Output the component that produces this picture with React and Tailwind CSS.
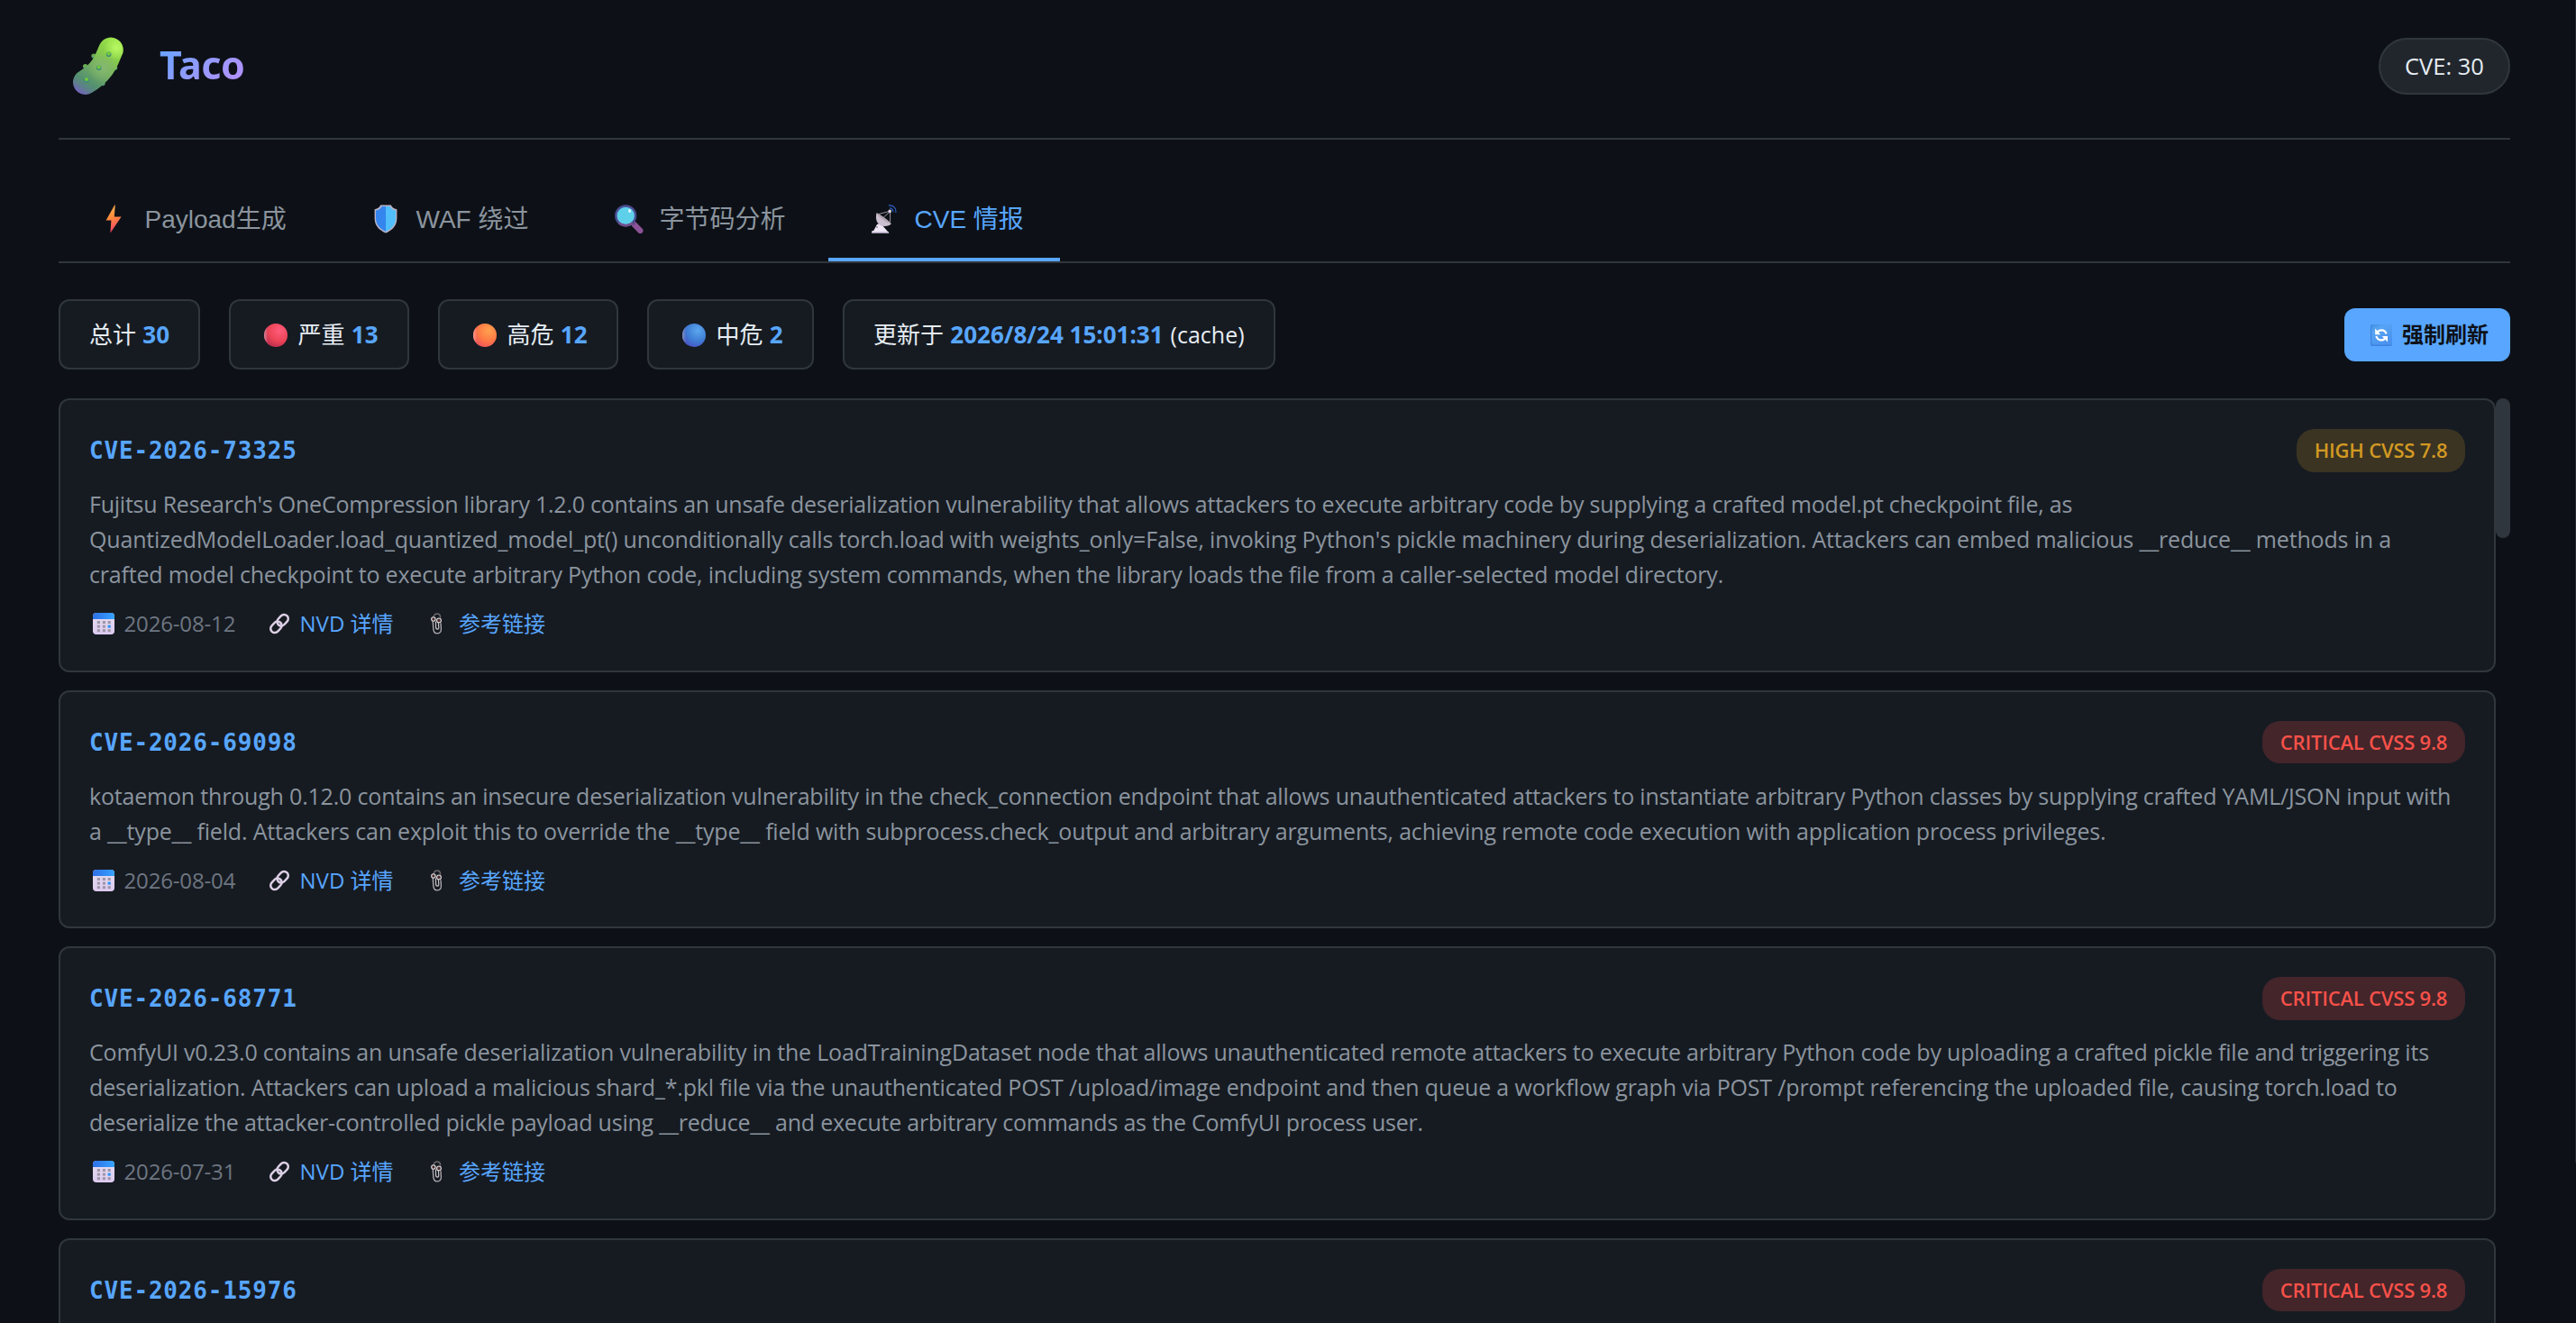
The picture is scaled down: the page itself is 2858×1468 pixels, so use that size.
import React from 'react';

function Pickle() {
  const bumps = [[39.7, 19.3], [28.7, 34.3], [15, 47.7]];
  const edge = [[23, 21], [13.6, 32.5], [46.6, 34.2], [33, 51.6]];
  return (
    <svg className="ml-4 h-16 w-14 shrink-0" viewBox="0 0 56 64" fill="none">
      <defs>
        <linearGradient id="pkBody" x1="50" y1="2" x2="10" y2="64" gradientUnits="userSpaceOnUse">
          <stop offset="0" stopColor="#9be548" />
          <stop offset="0.3" stopColor="#86cb49" />
          <stop offset="0.5" stopColor="#76b25c" />
          <stop offset="0.8" stopColor="#549070" />
          <stop offset="0.9" stopColor="#5d7f8c" />
          <stop offset="1" stopColor="#7463bd" />
        </linearGradient>
        <radialGradient id="pkShine" cx="48" cy="12" r="14" gradientUnits="userSpaceOnUse">
          <stop offset="0" stopColor="#b8f963" />
          <stop offset="1" stopColor="#b8f963" stopOpacity="0" />
        </radialGradient>
        <radialGradient id="pkMid" cx="33" cy="34" r="17" gradientUnits="userSpaceOnUse">
          <stop offset="0" stopColor="#86b872" />
          <stop offset="1" stopColor="#86b872" stopOpacity="0" />
        </radialGradient>
        <linearGradient id="pkBump" x1="0" y1="0" x2="0" y2="1">
          <stop offset="0" stopColor="#5faa3c" />
          <stop offset="0.5" stopColor="#6fae5a" />
          <stop offset="1" stopColor="#3f8a80" />
        </linearGradient>
      </defs>
      {edge.map(([x, y]) => <circle key={x} cx={x} cy={y} r="2.6" fill="url(#pkBump)" />)}
      {['url(#pkBody)', 'url(#pkMid)', 'url(#pkShine)'].map((s) => (
        <path key={s} d="M42 14.3C38 22 36 37 13.7 50.2" stroke={s} strokeWidth="27.4" strokeLinecap="round" />
      ))}
      {bumps.map(([x, y]) => (
        <g key={x}>
          <circle cx={x} cy={y} r="2.8" fill="#3d8a7c" />
          <circle cx={x} cy={y - 0.7} r="2.1" fill="#74c83c" />
        </g>
      ))}
    </svg>
  );
}

const Bolt = () => (
  <svg className="size-8" viewBox="0 0 32 32">
    <defs>
      <linearGradient id="bolt" x1="0" y1="0" x2="0.2" y2="1">
        <stop offset="0" stopColor="#ffb951" />
        <stop offset="0.5" stopColor="#ff8a3c" />
        <stop offset="1" stopColor="#f0436a" />
      </linearGradient>
    </defs>
    <path d="M16.2 0.4L6.6 17.4H12.4L11.4 31.6L23.6 13.6L15.8 13.4L16.8 0.6Z" fill="url(#bolt)" />
  </svg>
);

const Shield = () => (
  <svg className="size-8" viewBox="0 0 32 32">
    <path d="M10.2 0.5H21.8C22.6 2.8 24.8 4.4 28.4 5.2V15C28.4 23.4 23.2 28.6 16 31.6C8.8 28.6 3.6 23.4 3.6 15V5.2C7.2 4.4 9.4 2.8 10.2 0.5Z" fill="#b9b2c6" />
    <path d="M16 2H11.4C10.6 4.4 8.4 6 5 6.6V15C5 22.4 9.6 27 16 30Z" fill="#3585ee" />
    <path d="M16 2H20.6C21.4 4.4 23.6 6 27 6.6V15C27 22.4 22.4 27 16 30Z" fill="#50bffb" />
  </svg>
);

const Magnifier = () => (
  <svg className="size-8" viewBox="0 0 32 32">
    <path d="M21.6 22L28.4 29" stroke="#8c5396" strokeWidth="6.2" strokeLinecap="round" />
    <path d="M19.4 19.4L22 22" stroke="#63477c" strokeWidth="3.4" />
    <circle cx="12.2" cy="12.4" r="10.9" fill="#5fd0ea" stroke="#4a4d92" strokeWidth="2.4" />
    <path d="M4.6 20.2A10.9 10.9 0 0 0 19.8 20.2" stroke="#75508c" strokeWidth="2.4" fill="none" />
    <ellipse cx="16.6" cy="7" rx="1.7" ry="2" fill="#d5f5fb" />
  </svg>
);

const Dish = () => (
  <svg className="size-8" viewBox="0 0 32 32" fill="none">
    <path d="M8 22L12 20.8L21.4 31.6H2.2V29.6L4.4 28.8Z" fill="#efe6f5" />
    <path d="M2.2 30H20.4L21.4 31.6H2.2Z" fill="#cfc3dc" />
    <circle cx="8" cy="25" r="0.9" fill="#8d8397" />
    <path d="M7.6 9.2C5.6 16 8 22.8 14.4 23.8C18.6 24.4 22 23.4 23.8 21.2Z" fill="#cbbfd0" />
    <path d="M7.6 9.2C11 10.8 20 16.2 23.8 21.2C19 20.6 9.6 14.8 7.6 9.2Z" fill="#b5a7b4" />
    <path d="M9.6 10.6L22 7.4M15.4 14L22.4 8M22.6 8.4V19.6" stroke="#a8a2ae" strokeWidth="0.9" />
    <circle cx="22.2" cy="7.4" r="1.8" fill="#ddd3e4" />
    <path d="M22 3.9C24.6 4.2 25.8 5.8 25.8 8.2M20.8 0.8C26.4 0.6 29.4 3.8 29 9" stroke="#2f62cc" strokeWidth="1.2" />
  </svg>
);

const Refresh = () => (
  <svg className="mt-[2px] h-6 w-6" viewBox="0 0 24 24" fill="none">
    <defs>
      <linearGradient id="rf" x1="0" y1="0" x2="0.6" y2="1">
        <stop offset="0" stopColor="#3f8fe6" />
        <stop offset="0.3" stopColor="#57a4f4" />
        <stop offset="1" stopColor="#4a93ef" />
      </linearGradient>
    </defs>
    <rect width="24" height="24" y="0" rx="2" fill="#3e83dd" />
    <rect x="1.2" width="22.8" height="22.4" rx="1.8" fill="url(#rf)" />
    <path d="M7 9.4C9.4 5.4 15.6 5.2 17.6 10.4" stroke="#fff" strokeWidth="2.3" />
    <path d="M5.2 4.6V11.2H11.2Z" fill="#fff" />
    <path d="M6.4 13C8 18.4 14.2 18.6 16.8 14.8" stroke="#fff" strokeWidth="2.3" />
    <path d="M19 19.6V13H12.8Z" fill="#fff" />
  </svg>
);

const Calendar = () => (
  <svg className="ml-[4px] size-6" viewBox="0 0 24 24">
    <defs>
      <linearGradient id="calTop" x1="0" y1="0" x2="1" y2="0">
        <stop offset="0" stopColor="#2f6fe6" />
        <stop offset="1" stopColor="#35a3ff" />
      </linearGradient>
      <linearGradient id="calBody" x1="0" y1="0" x2="0" y2="1">
        <stop offset="0" stopColor="#e6dcee" />
        <stop offset="1" stopColor="#dccbf0" />
      </linearGradient>
    </defs>
    <rect width="24" height="24" rx="4" fill="url(#calBody)" />
    <path d="M0 7V4A4 4 0 0 1 4 0H20A4 4 0 0 1 24 4V7Z" fill="url(#calTop)" />
    {[9, 13.6, 18.2].map((y) => [4.8, 10.8, 16.6].map((x) => (
      <rect key={x + y} x={x} y={y} width="3.2" height="3" fill={x === 16.6 && y === 13.6 ? '#2f93f5' : '#9e97a8'} />
    )))}
  </svg>
);

const Chain = () => (
  <svg className="size-6" viewBox="0 0 24 24" fill="none" stroke="#ddd0e6" strokeWidth="2.5">
    <rect x="-6.9" y="-4.6" width="13.8" height="9.2" rx="4.6" transform="translate(15.6 8.2) rotate(-47)" />
    <rect x="-6.9" y="-4.6" width="13.8" height="9.2" rx="4.6" transform="translate(8.4 15.8) rotate(-47)" />
  </svg>
);

const Clip = () => (
  <svg className="h-6 w-[14px]" viewBox="0 0 14 24" fill="none">
    <path d="M3.2 5C3.4 2.4 5 1 7 1C9.4 1 10.6 2.8 10.6 5.4" stroke="#6d686c" strokeWidth="1.5" />
    <path d="M2.2 9L2.8 17.6C3 21.4 4.8 22.9 7.2 22.9C10.2 22.9 11.6 20.6 11.4 17.4L11 11.4" stroke="#b3afb4" strokeWidth="1.3" />
    <path d="M5.4 9.6L5.6 16.4C5.8 18.6 8.8 18.6 8.8 16.4L8.4 11" stroke="#c9c5ca" strokeWidth="1.2" />
    <circle cx="2.9" cy="7" r="2.2" fill="#4a2f30" stroke="#e6e2e4" strokeWidth="1.1" />
    <circle cx="9" cy="8.4" r="2.4" fill="#4a2f30" stroke="#e6e2e4" strokeWidth="1.1" />
  </svg>
);

const BALLS = {
  red: ['#ff5c7c', '#ee4558', '#b52a4c', '#d8899a'],
  orange: ['#ffa24f', '#ff7a45', '#ea4f5e', '#ffa08a'],
  blue: ['#5ca6ee', '#3f7fd6', '#4a4fc4', '#8494bb'],
};

function Ball({ tone }) {
  const [hi, mid, low, rim] = BALLS[tone];
  return (
    <svg className="mr-[11.5px] ml-[5px] mt-[2px] size-[26px]" viewBox="0 0 26 26">
      <defs>
        <radialGradient id={`ball-${tone}`} cx="0.66" cy="0.3" r="0.8">
          <stop offset="0" stopColor={hi} />
          <stop offset="0.55" stopColor={mid} />
          <stop offset="1" stopColor={low} />
        </radialGradient>
        <linearGradient id={`rim-${tone}`} x1="0" y1="0" x2="0.16" y2="0">
          <stop offset="0" stopColor={rim} />
          <stop offset="1" stopColor={rim} stopOpacity="0" />
        </linearGradient>
      </defs>
      <circle cx="13" cy="13" r="13" fill={`url(#ball-${tone})`} />
      <circle cx="13" cy="13" r="13" fill={`url(#rim-${tone})`} />
    </svg>
  );
}

const TABS = [
  { label: 'Payload生成', icon: <Bolt />, width: 'w-[293px]' },
  { label: 'WAF 绕过', icon: <Shield />, width: 'w-[262px]' },
  { label: '字节码分析', icon: <Magnifier />, width: 'w-[275px]' },
  { label: 'CVE 情报', icon: <Dish />, width: 'w-[257px]', active: true },
];

const STATS = [
  { label: '总计', value: '30', width: 'w-[157px]' },
  { label: '严重', value: '13', tone: 'red', width: 'w-[200px]' },
  { label: '高危', value: '12', tone: 'orange', width: 'w-[200px]' },
  { label: '中危', value: '2', tone: 'blue', width: 'w-[185px]' },
  { label: '更新于', value: '2026/8/24 15:01:31', note: '(cache)', width: 'w-[480px]' },
];

const CVES = [
  {
    id: 'CVE-2026-73325',
    level: 'HIGH',
    score: '7.8',
    date: '2026-08-12',
    height: 'h-[303.5px]',
    lines: [
      ['tracking-[-0.234px]', "Fujitsu Research's OneCompression library 1.2.0 contains an unsafe deserialization vulnerability that allows attackers to execute arbitrary code by supplying a crafted model.pt checkpoint file, as"],
      ['tracking-[-0.165px]', "QuantizedModelLoader.load_quantized_model_pt() unconditionally calls torch.load with weights_only=False, invoking Python's pickle machinery during deserialization. Attackers can embed malicious __reduce__ methods in a"],
      ['tracking-[-0.187px]', 'crafted model checkpoint to execute arbitrary Python code, including system commands, when the library loads the file from a caller-selected model directory.'],
    ],
  },
  {
    id: 'CVE-2026-69098',
    level: 'CRITICAL',
    score: '9.8',
    date: '2026-08-04',
    height: 'h-[264.5px]',
    lines: [
      ['tracking-[-0.19px]', 'kotaemon through 0.12.0 contains an insecure deserialization vulnerability in the check_connection endpoint that allows unauthenticated attackers to instantiate arbitrary Python classes by supplying crafted YAML/JSON input with'],
      ['tracking-[-0.18px]', 'a __type__ field. Attackers can exploit this to override the __type__ field with subprocess.check_output and arbitrary arguments, achieving remote code execution with application process privileges.'],
    ],
  },
  {
    id: 'CVE-2026-68771',
    level: 'CRITICAL',
    score: '9.8',
    date: '2026-07-31',
    height: 'h-[303.5px]',
    lines: [
      ['tracking-[-0.19px]', 'ComfyUI v0.23.0 contains an unsafe deserialization vulnerability in the LoadTrainingDataset node that allows unauthenticated remote attackers to execute arbitrary Python code by uploading a crafted pickle file and triggering its'],
      ['tracking-[-0.165px]', 'deserialization. Attackers can upload a malicious shard_*.pkl file via the unauthenticated POST /upload/image endpoint and then queue a workflow graph via POST /prompt referencing the uploaded file, causing torch.load to'],
      ['tracking-[-0.217px]', 'deserialize the attacker-controlled pickle payload using __reduce__ and execute arbitrary commands as the ComfyUI process user.'],
    ],
  },
  { id: 'CVE-2026-15976', level: 'CRITICAL', score: '9.8', height: 'h-[303.5px]' },
];

function Card({ cve }) {
  const critical = cve.level === 'CRITICAL';
  return (
    <article className={`${cve.height} shrink-0 rounded-xl border-2 border-[#30363d] bg-[#161b22] px-8 pt-8`}>
      <div className="flex h-12 items-center justify-between">
        <h2 className="mt-px font-['DejaVu_Sans_Mono',monospace] text-[26px] font-bold tracking-[0.82px] text-[#58a6ff]">{cve.id}</h2>
        <span
          className={`flex h-[47.5px] items-center justify-center rounded-[20px] pb-px text-[22px] font-semibold tracking-[-0.2px] ${critical ? 'w-[225px] bg-[#f85149]/20 text-[#f85149]' : 'w-[187px] bg-[#d29922]/20 text-[#d29922]'}`}
        >
          {cve.level} CVSS {cve.score}
        </span>
      </div>
      {cve.lines && (
        <>
          <div className="mt-4 text-[25px] leading-[39px] text-[#8b949e]">
            {cve.lines.map(([tracking, text]) => (
              <p key={text} className={`whitespace-nowrap ${tracking}`}>{text}</p>
            ))}
          </div>
          <div className="mt-[17px] flex h-9 items-center text-2xl leading-9 whitespace-nowrap text-[#58a6ff]">
            <Calendar />
            <span className="ml-[10.5px] w-[160.5px] tracking-[-0.15px] text-[#6e7681]">{cve.date}</span>
            <Chain />
            <span className="ml-[10.5px] w-[145.5px]">NVD 详情</span>
            <Clip />
            <span className="ml-[17px]">参考链接</span>
          </div>
        </>
      )}
    </article>
  );
}

export default function App() {
  return (
    <div className="flex h-[1468px] w-[2858px] overflow-hidden bg-[#0d1117] font-['Open_Sans','Noto_Sans_CJK_SC',sans-serif] text-[#e6edf3]">
      <div className="flex w-[2857px] shrink-0 flex-col pr-[72px] pl-[65px]">
        <header className="flex h-[155px] shrink-0 items-start justify-between border-b-2 border-[#30363d] pt-[41px]">
          <div className="flex items-center">
            <Pickle />
            <h1 className="-mt-[2px] ml-10 bg-linear-135 from-[#58a6ff] to-[#bc8cff] bg-clip-text font-['Noto_Sans',sans-serif] text-[43px] leading-[64px] font-bold tracking-[-0.4px] text-transparent">Taco</h1>
          </div>
          <div className="mt-[1px] flex h-[63px] w-[146px] items-center justify-center rounded-full border-2 border-[#30363d] bg-[#21262d] text-[25.5px]">CVE: 30</div>
        </header>

        <nav className="mt-[45px] flex h-[92px] shrink-0 gap-2 border-b-2 border-[#30363d] font-['Liberation_Sans','Noto_Sans_CJK_SC',sans-serif] text-[28px]">
          {TABS.map((tab) => (
            <div
              key={tab.label}
              className={`flex h-[90px] shrink-0 items-center border-b-4 pl-[46px] whitespace-nowrap ${tab.width} ${tab.active ? 'border-[#58a6ff] text-[#58a6ff]' : 'border-transparent text-[#8b949e]'}`}
            >
              {tab.icon}
              <span className="mt-px ml-[17.5px]">{tab.label}</span>
            </div>
          ))}
        </nav>

        <div className="mt-10 flex h-[78px] shrink-0 items-center gap-8">
          {STATS.map((s) => (
            <div key={s.label} className={`flex h-[78px] shrink-0 items-center rounded-xl border-2 border-[#30363d] bg-[#161b22] pl-8 text-[26px] whitespace-nowrap ${s.width}`}>
              {s.tone && <Ball tone={s.tone} />}
              <span className="leading-[39px]">
                {s.label} <b className="ml-[0.5px] font-bold text-[#58a6ff]">{s.value}</b>
                {s.note && <span className="ml-[1.5px] text-[25px]"> {s.note}</span>}
              </span>
            </div>
          ))}
          <button className="ml-auto flex h-[59px] w-[184px] items-center rounded-xl bg-[#58a6ff] pl-[29px] text-2xl font-bold text-[#0d1117]">
            <Refresh />
            <span className="ml-[11px] whitespace-nowrap">强制刷新</span>
          </button>
        </div>

        <div className="mt-8 flex min-h-0 flex-1 overflow-hidden">
          <div className="flex w-[2704px] flex-col gap-5">
            {CVES.map((cve) => <Card key={cve.id} cve={cve} />)}
          </div>
          <div className="h-[155px] w-4 rounded-lg bg-[#30363d]" />
        </div>
      </div>
      <div className="h-[1290px] w-px bg-[#272b33]" />
    </div>
  );
}
